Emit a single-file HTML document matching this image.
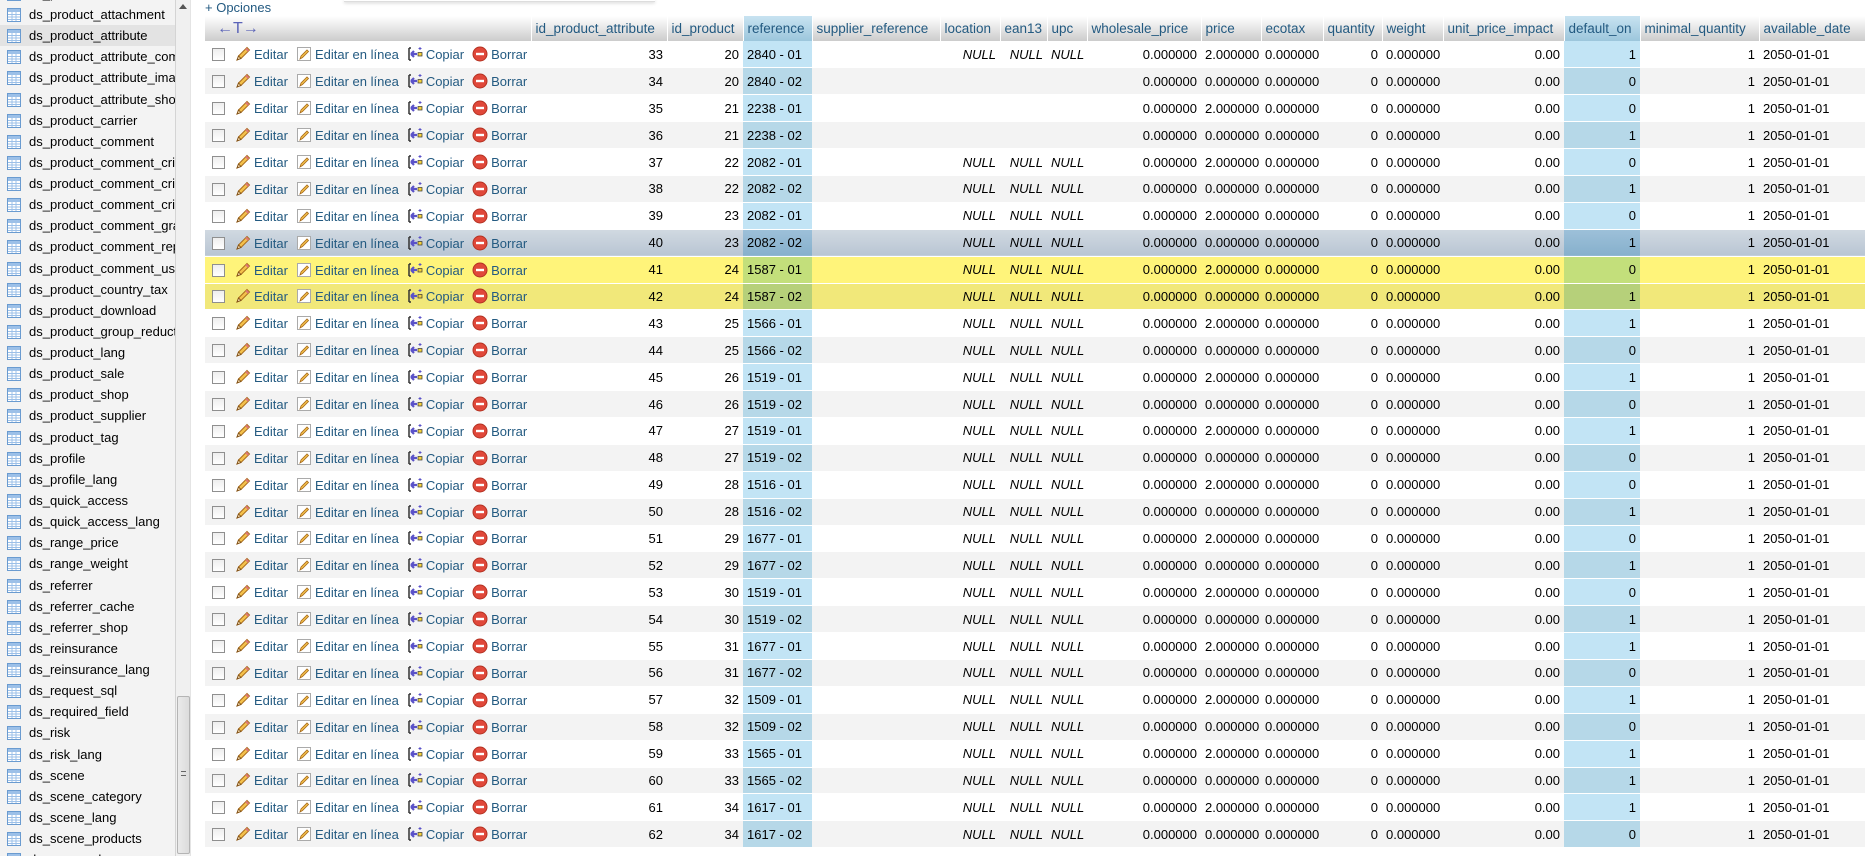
<!DOCTYPE html>
<html><head><meta charset="utf-8">
<style>
*{margin:0;padding:0;box-sizing:border-box}
body{width:1865px;height:856px;overflow:hidden;background:#fff;font-family:"Liberation Sans",Arial,sans-serif;font-size:13px;position:relative}
#side{position:absolute;left:0;top:0;width:175px;height:856px;background:#f3f3f3;overflow:hidden}
#side div{position:absolute;left:0;width:175px;height:21px;line-height:21px;padding-left:29px;color:#000;white-space:nowrap;overflow:hidden}
#side div.sel{background:#e3e3e3}
#side svg{position:absolute;left:6px;top:3px}
#sb{position:absolute;left:175px;top:0;width:16px;height:856px;background:#f0f0f0;border-left:1px solid #d4d4d4;border-right:1px solid #e4e4e4}
#thumb{position:absolute;left:1px;top:696px;width:13px;height:158px;background:linear-gradient(90deg,#eaeaea,#dcdcdc);border:1px solid #b4b4b4;border-radius:2px}
#opc{position:absolute;left:205px;top:0;color:#235a81;font-size:13px;line-height:15px}
#pop{position:absolute;left:344px;top:0;width:311px;height:2px;border-bottom:1px solid #ddd;box-shadow:0 1px 3px #ccc}
table{position:absolute;left:205px;top:16px;border-collapse:collapse;table-layout:fixed;width:1662px}
th{height:25px;background:linear-gradient(#fff,#ccc);color:#235a81;font-weight:normal;text-align:left;padding:0 4px;border-left:1px solid #fff;white-space:nowrap;overflow:hidden;font-size:13.5px}
td{height:26.9px;padding:0 4px;white-space:nowrap;overflow:hidden;color:#000;border-bottom:1px solid #fff}
td.r{text-align:right}
td i{font-style:italic}
tr.g td{background:#f3f3f3}
tr.w td{background:#fff}
tr.w td.h{background:#c2e4f5}
tr.g td.h{background:#b6d8e8}
th.h{background:linear-gradient(#c8e3f1,#9cc6dc)}
tr.hv td{background:linear-gradient(#d1d9e1,#b8c5d3)}
tr.hv td.h{background:linear-gradient(#9dc0d9,#86b0cc)}
tr.m1 td{background:#fff47a}
tr.m1 td.h{background:#c3df7b}
tr.m2 td{background:#f1e87a}
tr.m2 td.h{background:#b6d07a}
td.a{padding-left:7px;color:#235a81}
.cb{display:inline-block;width:13px;height:13px;border:1px solid #8f8f8f;background:linear-gradient(#eee,#fff);vertical-align:-2px;margin-right:10px}
.a svg{vertical-align:-3px;margin-right:3px}
.a span.t{margin-right:8px}
</style></head><body>
<svg width="0" height="0" style="position:absolute">
<defs>
<symbol id="pen" viewBox="0 0 16 16"><path d="M2 14 L3.5 10 L12 1.5 L14.5 4 L6 12.5 Z" fill="#f3c04b" stroke="#a86a1a" stroke-width="1"/><path d="M2 14 L3.5 10 L6 12.5 Z" fill="#f0d6a8" stroke="#7a4a12" stroke-width=".8"/><path d="M11 2.5 L13.5 5" stroke="#d77" stroke-width="2"/></symbol>
<symbol id="pg" viewBox="0 0 16 16"><rect x="1.5" y="1.5" width="13" height="13" fill="#fff" stroke="#aaa"/><path d="M4 13 L5 10 L11 4 L12.5 5.5 L6.5 11.5 Z" fill="#f3c04b" stroke="#a86a1a" stroke-width=".8"/></symbol>
<symbol id="cp" viewBox="0 0 16 16"><path d="M2 2 h2 M2 2 v12 M2 14 h2" stroke="#333" stroke-width="1.5" fill="none"/><path d="M4 8 h6 M4 8 l3 -3 M4 8 l3 3" stroke="#5a52c8" stroke-width="2.2" fill="none"/><rect x="11" y="6.5" width="4" height="3.5" fill="#f6d33a" stroke="#333" stroke-width=".7"/><path d="M13 1 v3 M11.5 2.5 h3" stroke="#5a52c8" stroke-width="1"/></symbol>
<symbol id="del" viewBox="0 0 16 16"><circle cx="8" cy="8" r="7" fill="#e0483a" stroke="#b43222"/><rect x="4" y="6.8" width="8" height="2.4" fill="#fff"/></symbol>
<symbol id="tb" viewBox="0 0 16 16"><rect x="1.5" y="1.5" width="13" height="13" fill="#fff" stroke="#6a9bd0"/><rect x="2" y="2" width="12" height="3" fill="#9cc0e8"/><path d="M2 7.5h12M2 10h12M2 12.5h12M6 5v9M10 5v9" stroke="#9cc0e8" stroke-width="1"/></symbol>
</defs></svg>

<div id="side">
<div style="top:-17px"><svg width="16" height="16"><use href="#tb"/></svg>ds_product</div>
<div style="top:4px"><svg width="16" height="16"><use href="#tb"/></svg>ds_product_attachment</div>
<div class="sel" style="top:25px"><svg width="16" height="16"><use href="#tb"/></svg>ds_product_attribute</div>
<div style="top:46px"><svg width="16" height="16"><use href="#tb"/></svg>ds_product_attribute_combination</div>
<div style="top:67px"><svg width="16" height="16"><use href="#tb"/></svg>ds_product_attribute_image</div>
<div style="top:89px"><svg width="16" height="16"><use href="#tb"/></svg>ds_product_attribute_shop</div>
<div style="top:110px"><svg width="16" height="16"><use href="#tb"/></svg>ds_product_carrier</div>
<div style="top:131px"><svg width="16" height="16"><use href="#tb"/></svg>ds_product_comment</div>
<div style="top:152px"><svg width="16" height="16"><use href="#tb"/></svg>ds_product_comment_criterion</div>
<div style="top:173px"><svg width="16" height="16"><use href="#tb"/></svg>ds_product_comment_criterion_category</div>
<div style="top:194px"><svg width="16" height="16"><use href="#tb"/></svg>ds_product_comment_criterion_lang</div>
<div style="top:215px"><svg width="16" height="16"><use href="#tb"/></svg>ds_product_comment_grade</div>
<div style="top:236px"><svg width="16" height="16"><use href="#tb"/></svg>ds_product_comment_report</div>
<div style="top:258px"><svg width="16" height="16"><use href="#tb"/></svg>ds_product_comment_usefulness</div>
<div style="top:279px"><svg width="16" height="16"><use href="#tb"/></svg>ds_product_country_tax</div>
<div style="top:300px"><svg width="16" height="16"><use href="#tb"/></svg>ds_product_download</div>
<div style="top:321px"><svg width="16" height="16"><use href="#tb"/></svg>ds_product_group_reduction_cache</div>
<div style="top:342px"><svg width="16" height="16"><use href="#tb"/></svg>ds_product_lang</div>
<div style="top:363px"><svg width="16" height="16"><use href="#tb"/></svg>ds_product_sale</div>
<div style="top:384px"><svg width="16" height="16"><use href="#tb"/></svg>ds_product_shop</div>
<div style="top:405px"><svg width="16" height="16"><use href="#tb"/></svg>ds_product_supplier</div>
<div style="top:427px"><svg width="16" height="16"><use href="#tb"/></svg>ds_product_tag</div>
<div style="top:448px"><svg width="16" height="16"><use href="#tb"/></svg>ds_profile</div>
<div style="top:469px"><svg width="16" height="16"><use href="#tb"/></svg>ds_profile_lang</div>
<div style="top:490px"><svg width="16" height="16"><use href="#tb"/></svg>ds_quick_access</div>
<div style="top:511px"><svg width="16" height="16"><use href="#tb"/></svg>ds_quick_access_lang</div>
<div style="top:532px"><svg width="16" height="16"><use href="#tb"/></svg>ds_range_price</div>
<div style="top:553px"><svg width="16" height="16"><use href="#tb"/></svg>ds_range_weight</div>
<div style="top:575px"><svg width="16" height="16"><use href="#tb"/></svg>ds_referrer</div>
<div style="top:596px"><svg width="16" height="16"><use href="#tb"/></svg>ds_referrer_cache</div>
<div style="top:617px"><svg width="16" height="16"><use href="#tb"/></svg>ds_referrer_shop</div>
<div style="top:638px"><svg width="16" height="16"><use href="#tb"/></svg>ds_reinsurance</div>
<div style="top:659px"><svg width="16" height="16"><use href="#tb"/></svg>ds_reinsurance_lang</div>
<div style="top:680px"><svg width="16" height="16"><use href="#tb"/></svg>ds_request_sql</div>
<div style="top:701px"><svg width="16" height="16"><use href="#tb"/></svg>ds_required_field</div>
<div style="top:722px"><svg width="16" height="16"><use href="#tb"/></svg>ds_risk</div>
<div style="top:744px"><svg width="16" height="16"><use href="#tb"/></svg>ds_risk_lang</div>
<div style="top:765px"><svg width="16" height="16"><use href="#tb"/></svg>ds_scene</div>
<div style="top:786px"><svg width="16" height="16"><use href="#tb"/></svg>ds_scene_category</div>
<div style="top:807px"><svg width="16" height="16"><use href="#tb"/></svg>ds_scene_lang</div>
<div style="top:828px"><svg width="16" height="16"><use href="#tb"/></svg>ds_scene_products</div>
<div style="top:849px"><svg width="16" height="16"><use href="#tb"/></svg>ds_scene_shop</div>
</div>
<div id="sb"><div style="position:absolute;left:3px;top:4px;width:0;height:0;border-left:4px solid transparent;border-right:4px solid transparent;border-bottom:5px solid #555"></div><div id="thumb"><div style="position:absolute;left:3px;top:74px;width:5px;height:5px;border-top:1px solid #666;border-bottom:1px solid #666"></div></div></div>
<div id="pop"></div>
<div id="opc">+ Opciones</div>

<table>
<colgroup><col style="width:326px"><col style="width:136px"><col style="width:76px"><col style="width:69px"><col style="width:128px"><col style="width:60px"><col style="width:47px"><col style="width:40px"><col style="width:114px"><col style="width:60px"><col style="width:62px"><col style="width:59px"><col style="width:61px"><col style="width:121px"><col style="width:76px"><col style="width:119px"><col style="width:108px"></colgroup>
<tr><th style="border-left:none;color:#5a63b8;font-size:16px;padding-left:12px">←T→</th><th>id_product_attribute</th><th>id_product</th><th class="h">reference</th><th>supplier_reference</th><th>location</th><th>ean13</th><th>upc</th><th>wholesale_price</th><th>price</th><th>ecotax</th><th>quantity</th><th>weight</th><th>unit_price_impact</th><th class="h">default_on</th><th>minimal_quantity</th><th>available_date</th></tr>
<tr class="w"><td class="a"><span class="cb"></span><svg width="16" height="16"><use href="#pen"/></svg><span class="t">Editar</span><svg width="16" height="16"><use href="#pg"/></svg><span class="t">Editar en línea</span><svg width="16" height="16"><use href="#cp"/></svg><span class="t">Copiar</span><svg width="16" height="16"><use href="#del"/></svg>Borrar</td><td class="r">33</td><td class="r">20</td><td class="h">2840 - 01</td><td></td><td class="r"><i>NULL</i></td><td class="r"><i>NULL</i></td><td><i>NULL</i></td><td class="r">0.000000</td><td>2.000000</td><td>0.000000</td><td class="r">0</td><td>0.000000</td><td class="r">0.00</td><td class="r h">1</td><td class="r">1</td><td>2050-01-01</td></tr>
<tr class="g"><td class="a"><span class="cb"></span><svg width="16" height="16"><use href="#pen"/></svg><span class="t">Editar</span><svg width="16" height="16"><use href="#pg"/></svg><span class="t">Editar en línea</span><svg width="16" height="16"><use href="#cp"/></svg><span class="t">Copiar</span><svg width="16" height="16"><use href="#del"/></svg>Borrar</td><td class="r">34</td><td class="r">20</td><td class="h">2840 - 02</td><td></td><td></td><td></td><td></td><td class="r">0.000000</td><td>0.000000</td><td>0.000000</td><td class="r">0</td><td>0.000000</td><td class="r">0.00</td><td class="r h">0</td><td class="r">1</td><td>2050-01-01</td></tr>
<tr class="w"><td class="a"><span class="cb"></span><svg width="16" height="16"><use href="#pen"/></svg><span class="t">Editar</span><svg width="16" height="16"><use href="#pg"/></svg><span class="t">Editar en línea</span><svg width="16" height="16"><use href="#cp"/></svg><span class="t">Copiar</span><svg width="16" height="16"><use href="#del"/></svg>Borrar</td><td class="r">35</td><td class="r">21</td><td class="h">2238 - 01</td><td></td><td></td><td></td><td></td><td class="r">0.000000</td><td>2.000000</td><td>0.000000</td><td class="r">0</td><td>0.000000</td><td class="r">0.00</td><td class="r h">0</td><td class="r">1</td><td>2050-01-01</td></tr>
<tr class="g"><td class="a"><span class="cb"></span><svg width="16" height="16"><use href="#pen"/></svg><span class="t">Editar</span><svg width="16" height="16"><use href="#pg"/></svg><span class="t">Editar en línea</span><svg width="16" height="16"><use href="#cp"/></svg><span class="t">Copiar</span><svg width="16" height="16"><use href="#del"/></svg>Borrar</td><td class="r">36</td><td class="r">21</td><td class="h">2238 - 02</td><td></td><td></td><td></td><td></td><td class="r">0.000000</td><td>0.000000</td><td>0.000000</td><td class="r">0</td><td>0.000000</td><td class="r">0.00</td><td class="r h">1</td><td class="r">1</td><td>2050-01-01</td></tr>
<tr class="w"><td class="a"><span class="cb"></span><svg width="16" height="16"><use href="#pen"/></svg><span class="t">Editar</span><svg width="16" height="16"><use href="#pg"/></svg><span class="t">Editar en línea</span><svg width="16" height="16"><use href="#cp"/></svg><span class="t">Copiar</span><svg width="16" height="16"><use href="#del"/></svg>Borrar</td><td class="r">37</td><td class="r">22</td><td class="h">2082 - 01</td><td></td><td class="r"><i>NULL</i></td><td class="r"><i>NULL</i></td><td><i>NULL</i></td><td class="r">0.000000</td><td>2.000000</td><td>0.000000</td><td class="r">0</td><td>0.000000</td><td class="r">0.00</td><td class="r h">0</td><td class="r">1</td><td>2050-01-01</td></tr>
<tr class="g"><td class="a"><span class="cb"></span><svg width="16" height="16"><use href="#pen"/></svg><span class="t">Editar</span><svg width="16" height="16"><use href="#pg"/></svg><span class="t">Editar en línea</span><svg width="16" height="16"><use href="#cp"/></svg><span class="t">Copiar</span><svg width="16" height="16"><use href="#del"/></svg>Borrar</td><td class="r">38</td><td class="r">22</td><td class="h">2082 - 02</td><td></td><td class="r"><i>NULL</i></td><td class="r"><i>NULL</i></td><td><i>NULL</i></td><td class="r">0.000000</td><td>0.000000</td><td>0.000000</td><td class="r">0</td><td>0.000000</td><td class="r">0.00</td><td class="r h">1</td><td class="r">1</td><td>2050-01-01</td></tr>
<tr class="w"><td class="a"><span class="cb"></span><svg width="16" height="16"><use href="#pen"/></svg><span class="t">Editar</span><svg width="16" height="16"><use href="#pg"/></svg><span class="t">Editar en línea</span><svg width="16" height="16"><use href="#cp"/></svg><span class="t">Copiar</span><svg width="16" height="16"><use href="#del"/></svg>Borrar</td><td class="r">39</td><td class="r">23</td><td class="h">2082 - 01</td><td></td><td class="r"><i>NULL</i></td><td class="r"><i>NULL</i></td><td><i>NULL</i></td><td class="r">0.000000</td><td>2.000000</td><td>0.000000</td><td class="r">0</td><td>0.000000</td><td class="r">0.00</td><td class="r h">0</td><td class="r">1</td><td>2050-01-01</td></tr>
<tr class="hv"><td class="a"><span class="cb"></span><svg width="16" height="16"><use href="#pen"/></svg><span class="t">Editar</span><svg width="16" height="16"><use href="#pg"/></svg><span class="t">Editar en línea</span><svg width="16" height="16"><use href="#cp"/></svg><span class="t">Copiar</span><svg width="16" height="16"><use href="#del"/></svg>Borrar</td><td class="r">40</td><td class="r">23</td><td class="h">2082 - 02</td><td></td><td class="r"><i>NULL</i></td><td class="r"><i>NULL</i></td><td><i>NULL</i></td><td class="r">0.000000</td><td>0.000000</td><td>0.000000</td><td class="r">0</td><td>0.000000</td><td class="r">0.00</td><td class="r h">1</td><td class="r">1</td><td>2050-01-01</td></tr>
<tr class="m1"><td class="a"><span class="cb"></span><svg width="16" height="16"><use href="#pen"/></svg><span class="t">Editar</span><svg width="16" height="16"><use href="#pg"/></svg><span class="t">Editar en línea</span><svg width="16" height="16"><use href="#cp"/></svg><span class="t">Copiar</span><svg width="16" height="16"><use href="#del"/></svg>Borrar</td><td class="r">41</td><td class="r">24</td><td class="h">1587 - 01</td><td></td><td class="r"><i>NULL</i></td><td class="r"><i>NULL</i></td><td><i>NULL</i></td><td class="r">0.000000</td><td>2.000000</td><td>0.000000</td><td class="r">0</td><td>0.000000</td><td class="r">0.00</td><td class="r h">0</td><td class="r">1</td><td>2050-01-01</td></tr>
<tr class="m2"><td class="a"><span class="cb"></span><svg width="16" height="16"><use href="#pen"/></svg><span class="t">Editar</span><svg width="16" height="16"><use href="#pg"/></svg><span class="t">Editar en línea</span><svg width="16" height="16"><use href="#cp"/></svg><span class="t">Copiar</span><svg width="16" height="16"><use href="#del"/></svg>Borrar</td><td class="r">42</td><td class="r">24</td><td class="h">1587 - 02</td><td></td><td class="r"><i>NULL</i></td><td class="r"><i>NULL</i></td><td><i>NULL</i></td><td class="r">0.000000</td><td>0.000000</td><td>0.000000</td><td class="r">0</td><td>0.000000</td><td class="r">0.00</td><td class="r h">1</td><td class="r">1</td><td>2050-01-01</td></tr>
<tr class="w"><td class="a"><span class="cb"></span><svg width="16" height="16"><use href="#pen"/></svg><span class="t">Editar</span><svg width="16" height="16"><use href="#pg"/></svg><span class="t">Editar en línea</span><svg width="16" height="16"><use href="#cp"/></svg><span class="t">Copiar</span><svg width="16" height="16"><use href="#del"/></svg>Borrar</td><td class="r">43</td><td class="r">25</td><td class="h">1566 - 01</td><td></td><td class="r"><i>NULL</i></td><td class="r"><i>NULL</i></td><td><i>NULL</i></td><td class="r">0.000000</td><td>2.000000</td><td>0.000000</td><td class="r">0</td><td>0.000000</td><td class="r">0.00</td><td class="r h">1</td><td class="r">1</td><td>2050-01-01</td></tr>
<tr class="g"><td class="a"><span class="cb"></span><svg width="16" height="16"><use href="#pen"/></svg><span class="t">Editar</span><svg width="16" height="16"><use href="#pg"/></svg><span class="t">Editar en línea</span><svg width="16" height="16"><use href="#cp"/></svg><span class="t">Copiar</span><svg width="16" height="16"><use href="#del"/></svg>Borrar</td><td class="r">44</td><td class="r">25</td><td class="h">1566 - 02</td><td></td><td class="r"><i>NULL</i></td><td class="r"><i>NULL</i></td><td><i>NULL</i></td><td class="r">0.000000</td><td>0.000000</td><td>0.000000</td><td class="r">0</td><td>0.000000</td><td class="r">0.00</td><td class="r h">0</td><td class="r">1</td><td>2050-01-01</td></tr>
<tr class="w"><td class="a"><span class="cb"></span><svg width="16" height="16"><use href="#pen"/></svg><span class="t">Editar</span><svg width="16" height="16"><use href="#pg"/></svg><span class="t">Editar en línea</span><svg width="16" height="16"><use href="#cp"/></svg><span class="t">Copiar</span><svg width="16" height="16"><use href="#del"/></svg>Borrar</td><td class="r">45</td><td class="r">26</td><td class="h">1519 - 01</td><td></td><td class="r"><i>NULL</i></td><td class="r"><i>NULL</i></td><td><i>NULL</i></td><td class="r">0.000000</td><td>2.000000</td><td>0.000000</td><td class="r">0</td><td>0.000000</td><td class="r">0.00</td><td class="r h">1</td><td class="r">1</td><td>2050-01-01</td></tr>
<tr class="g"><td class="a"><span class="cb"></span><svg width="16" height="16"><use href="#pen"/></svg><span class="t">Editar</span><svg width="16" height="16"><use href="#pg"/></svg><span class="t">Editar en línea</span><svg width="16" height="16"><use href="#cp"/></svg><span class="t">Copiar</span><svg width="16" height="16"><use href="#del"/></svg>Borrar</td><td class="r">46</td><td class="r">26</td><td class="h">1519 - 02</td><td></td><td class="r"><i>NULL</i></td><td class="r"><i>NULL</i></td><td><i>NULL</i></td><td class="r">0.000000</td><td>0.000000</td><td>0.000000</td><td class="r">0</td><td>0.000000</td><td class="r">0.00</td><td class="r h">0</td><td class="r">1</td><td>2050-01-01</td></tr>
<tr class="w"><td class="a"><span class="cb"></span><svg width="16" height="16"><use href="#pen"/></svg><span class="t">Editar</span><svg width="16" height="16"><use href="#pg"/></svg><span class="t">Editar en línea</span><svg width="16" height="16"><use href="#cp"/></svg><span class="t">Copiar</span><svg width="16" height="16"><use href="#del"/></svg>Borrar</td><td class="r">47</td><td class="r">27</td><td class="h">1519 - 01</td><td></td><td class="r"><i>NULL</i></td><td class="r"><i>NULL</i></td><td><i>NULL</i></td><td class="r">0.000000</td><td>2.000000</td><td>0.000000</td><td class="r">0</td><td>0.000000</td><td class="r">0.00</td><td class="r h">1</td><td class="r">1</td><td>2050-01-01</td></tr>
<tr class="g"><td class="a"><span class="cb"></span><svg width="16" height="16"><use href="#pen"/></svg><span class="t">Editar</span><svg width="16" height="16"><use href="#pg"/></svg><span class="t">Editar en línea</span><svg width="16" height="16"><use href="#cp"/></svg><span class="t">Copiar</span><svg width="16" height="16"><use href="#del"/></svg>Borrar</td><td class="r">48</td><td class="r">27</td><td class="h">1519 - 02</td><td></td><td class="r"><i>NULL</i></td><td class="r"><i>NULL</i></td><td><i>NULL</i></td><td class="r">0.000000</td><td>0.000000</td><td>0.000000</td><td class="r">0</td><td>0.000000</td><td class="r">0.00</td><td class="r h">0</td><td class="r">1</td><td>2050-01-01</td></tr>
<tr class="w"><td class="a"><span class="cb"></span><svg width="16" height="16"><use href="#pen"/></svg><span class="t">Editar</span><svg width="16" height="16"><use href="#pg"/></svg><span class="t">Editar en línea</span><svg width="16" height="16"><use href="#cp"/></svg><span class="t">Copiar</span><svg width="16" height="16"><use href="#del"/></svg>Borrar</td><td class="r">49</td><td class="r">28</td><td class="h">1516 - 01</td><td></td><td class="r"><i>NULL</i></td><td class="r"><i>NULL</i></td><td><i>NULL</i></td><td class="r">0.000000</td><td>2.000000</td><td>0.000000</td><td class="r">0</td><td>0.000000</td><td class="r">0.00</td><td class="r h">0</td><td class="r">1</td><td>2050-01-01</td></tr>
<tr class="g"><td class="a"><span class="cb"></span><svg width="16" height="16"><use href="#pen"/></svg><span class="t">Editar</span><svg width="16" height="16"><use href="#pg"/></svg><span class="t">Editar en línea</span><svg width="16" height="16"><use href="#cp"/></svg><span class="t">Copiar</span><svg width="16" height="16"><use href="#del"/></svg>Borrar</td><td class="r">50</td><td class="r">28</td><td class="h">1516 - 02</td><td></td><td class="r"><i>NULL</i></td><td class="r"><i>NULL</i></td><td><i>NULL</i></td><td class="r">0.000000</td><td>0.000000</td><td>0.000000</td><td class="r">0</td><td>0.000000</td><td class="r">0.00</td><td class="r h">1</td><td class="r">1</td><td>2050-01-01</td></tr>
<tr class="w"><td class="a"><span class="cb"></span><svg width="16" height="16"><use href="#pen"/></svg><span class="t">Editar</span><svg width="16" height="16"><use href="#pg"/></svg><span class="t">Editar en línea</span><svg width="16" height="16"><use href="#cp"/></svg><span class="t">Copiar</span><svg width="16" height="16"><use href="#del"/></svg>Borrar</td><td class="r">51</td><td class="r">29</td><td class="h">1677 - 01</td><td></td><td class="r"><i>NULL</i></td><td class="r"><i>NULL</i></td><td><i>NULL</i></td><td class="r">0.000000</td><td>2.000000</td><td>0.000000</td><td class="r">0</td><td>0.000000</td><td class="r">0.00</td><td class="r h">0</td><td class="r">1</td><td>2050-01-01</td></tr>
<tr class="g"><td class="a"><span class="cb"></span><svg width="16" height="16"><use href="#pen"/></svg><span class="t">Editar</span><svg width="16" height="16"><use href="#pg"/></svg><span class="t">Editar en línea</span><svg width="16" height="16"><use href="#cp"/></svg><span class="t">Copiar</span><svg width="16" height="16"><use href="#del"/></svg>Borrar</td><td class="r">52</td><td class="r">29</td><td class="h">1677 - 02</td><td></td><td class="r"><i>NULL</i></td><td class="r"><i>NULL</i></td><td><i>NULL</i></td><td class="r">0.000000</td><td>0.000000</td><td>0.000000</td><td class="r">0</td><td>0.000000</td><td class="r">0.00</td><td class="r h">1</td><td class="r">1</td><td>2050-01-01</td></tr>
<tr class="w"><td class="a"><span class="cb"></span><svg width="16" height="16"><use href="#pen"/></svg><span class="t">Editar</span><svg width="16" height="16"><use href="#pg"/></svg><span class="t">Editar en línea</span><svg width="16" height="16"><use href="#cp"/></svg><span class="t">Copiar</span><svg width="16" height="16"><use href="#del"/></svg>Borrar</td><td class="r">53</td><td class="r">30</td><td class="h">1519 - 01</td><td></td><td class="r"><i>NULL</i></td><td class="r"><i>NULL</i></td><td><i>NULL</i></td><td class="r">0.000000</td><td>2.000000</td><td>0.000000</td><td class="r">0</td><td>0.000000</td><td class="r">0.00</td><td class="r h">0</td><td class="r">1</td><td>2050-01-01</td></tr>
<tr class="g"><td class="a"><span class="cb"></span><svg width="16" height="16"><use href="#pen"/></svg><span class="t">Editar</span><svg width="16" height="16"><use href="#pg"/></svg><span class="t">Editar en línea</span><svg width="16" height="16"><use href="#cp"/></svg><span class="t">Copiar</span><svg width="16" height="16"><use href="#del"/></svg>Borrar</td><td class="r">54</td><td class="r">30</td><td class="h">1519 - 02</td><td></td><td class="r"><i>NULL</i></td><td class="r"><i>NULL</i></td><td><i>NULL</i></td><td class="r">0.000000</td><td>0.000000</td><td>0.000000</td><td class="r">0</td><td>0.000000</td><td class="r">0.00</td><td class="r h">1</td><td class="r">1</td><td>2050-01-01</td></tr>
<tr class="w"><td class="a"><span class="cb"></span><svg width="16" height="16"><use href="#pen"/></svg><span class="t">Editar</span><svg width="16" height="16"><use href="#pg"/></svg><span class="t">Editar en línea</span><svg width="16" height="16"><use href="#cp"/></svg><span class="t">Copiar</span><svg width="16" height="16"><use href="#del"/></svg>Borrar</td><td class="r">55</td><td class="r">31</td><td class="h">1677 - 01</td><td></td><td class="r"><i>NULL</i></td><td class="r"><i>NULL</i></td><td><i>NULL</i></td><td class="r">0.000000</td><td>2.000000</td><td>0.000000</td><td class="r">0</td><td>0.000000</td><td class="r">0.00</td><td class="r h">1</td><td class="r">1</td><td>2050-01-01</td></tr>
<tr class="g"><td class="a"><span class="cb"></span><svg width="16" height="16"><use href="#pen"/></svg><span class="t">Editar</span><svg width="16" height="16"><use href="#pg"/></svg><span class="t">Editar en línea</span><svg width="16" height="16"><use href="#cp"/></svg><span class="t">Copiar</span><svg width="16" height="16"><use href="#del"/></svg>Borrar</td><td class="r">56</td><td class="r">31</td><td class="h">1677 - 02</td><td></td><td class="r"><i>NULL</i></td><td class="r"><i>NULL</i></td><td><i>NULL</i></td><td class="r">0.000000</td><td>0.000000</td><td>0.000000</td><td class="r">0</td><td>0.000000</td><td class="r">0.00</td><td class="r h">0</td><td class="r">1</td><td>2050-01-01</td></tr>
<tr class="w"><td class="a"><span class="cb"></span><svg width="16" height="16"><use href="#pen"/></svg><span class="t">Editar</span><svg width="16" height="16"><use href="#pg"/></svg><span class="t">Editar en línea</span><svg width="16" height="16"><use href="#cp"/></svg><span class="t">Copiar</span><svg width="16" height="16"><use href="#del"/></svg>Borrar</td><td class="r">57</td><td class="r">32</td><td class="h">1509 - 01</td><td></td><td class="r"><i>NULL</i></td><td class="r"><i>NULL</i></td><td><i>NULL</i></td><td class="r">0.000000</td><td>2.000000</td><td>0.000000</td><td class="r">0</td><td>0.000000</td><td class="r">0.00</td><td class="r h">1</td><td class="r">1</td><td>2050-01-01</td></tr>
<tr class="g"><td class="a"><span class="cb"></span><svg width="16" height="16"><use href="#pen"/></svg><span class="t">Editar</span><svg width="16" height="16"><use href="#pg"/></svg><span class="t">Editar en línea</span><svg width="16" height="16"><use href="#cp"/></svg><span class="t">Copiar</span><svg width="16" height="16"><use href="#del"/></svg>Borrar</td><td class="r">58</td><td class="r">32</td><td class="h">1509 - 02</td><td></td><td class="r"><i>NULL</i></td><td class="r"><i>NULL</i></td><td><i>NULL</i></td><td class="r">0.000000</td><td>0.000000</td><td>0.000000</td><td class="r">0</td><td>0.000000</td><td class="r">0.00</td><td class="r h">0</td><td class="r">1</td><td>2050-01-01</td></tr>
<tr class="w"><td class="a"><span class="cb"></span><svg width="16" height="16"><use href="#pen"/></svg><span class="t">Editar</span><svg width="16" height="16"><use href="#pg"/></svg><span class="t">Editar en línea</span><svg width="16" height="16"><use href="#cp"/></svg><span class="t">Copiar</span><svg width="16" height="16"><use href="#del"/></svg>Borrar</td><td class="r">59</td><td class="r">33</td><td class="h">1565 - 01</td><td></td><td class="r"><i>NULL</i></td><td class="r"><i>NULL</i></td><td><i>NULL</i></td><td class="r">0.000000</td><td>2.000000</td><td>0.000000</td><td class="r">0</td><td>0.000000</td><td class="r">0.00</td><td class="r h">1</td><td class="r">1</td><td>2050-01-01</td></tr>
<tr class="g"><td class="a"><span class="cb"></span><svg width="16" height="16"><use href="#pen"/></svg><span class="t">Editar</span><svg width="16" height="16"><use href="#pg"/></svg><span class="t">Editar en línea</span><svg width="16" height="16"><use href="#cp"/></svg><span class="t">Copiar</span><svg width="16" height="16"><use href="#del"/></svg>Borrar</td><td class="r">60</td><td class="r">33</td><td class="h">1565 - 02</td><td></td><td class="r"><i>NULL</i></td><td class="r"><i>NULL</i></td><td><i>NULL</i></td><td class="r">0.000000</td><td>0.000000</td><td>0.000000</td><td class="r">0</td><td>0.000000</td><td class="r">0.00</td><td class="r h">1</td><td class="r">1</td><td>2050-01-01</td></tr>
<tr class="w"><td class="a"><span class="cb"></span><svg width="16" height="16"><use href="#pen"/></svg><span class="t">Editar</span><svg width="16" height="16"><use href="#pg"/></svg><span class="t">Editar en línea</span><svg width="16" height="16"><use href="#cp"/></svg><span class="t">Copiar</span><svg width="16" height="16"><use href="#del"/></svg>Borrar</td><td class="r">61</td><td class="r">34</td><td class="h">1617 - 01</td><td></td><td class="r"><i>NULL</i></td><td class="r"><i>NULL</i></td><td><i>NULL</i></td><td class="r">0.000000</td><td>2.000000</td><td>0.000000</td><td class="r">0</td><td>0.000000</td><td class="r">0.00</td><td class="r h">1</td><td class="r">1</td><td>2050-01-01</td></tr>
<tr class="g"><td class="a"><span class="cb"></span><svg width="16" height="16"><use href="#pen"/></svg><span class="t">Editar</span><svg width="16" height="16"><use href="#pg"/></svg><span class="t">Editar en línea</span><svg width="16" height="16"><use href="#cp"/></svg><span class="t">Copiar</span><svg width="16" height="16"><use href="#del"/></svg>Borrar</td><td class="r">62</td><td class="r">34</td><td class="h">1617 - 02</td><td></td><td class="r"><i>NULL</i></td><td class="r"><i>NULL</i></td><td><i>NULL</i></td><td class="r">0.000000</td><td>0.000000</td><td>0.000000</td><td class="r">0</td><td>0.000000</td><td class="r">0.00</td><td class="r h">0</td><td class="r">1</td><td>2050-01-01</td></tr>
</table>
</body></html>
